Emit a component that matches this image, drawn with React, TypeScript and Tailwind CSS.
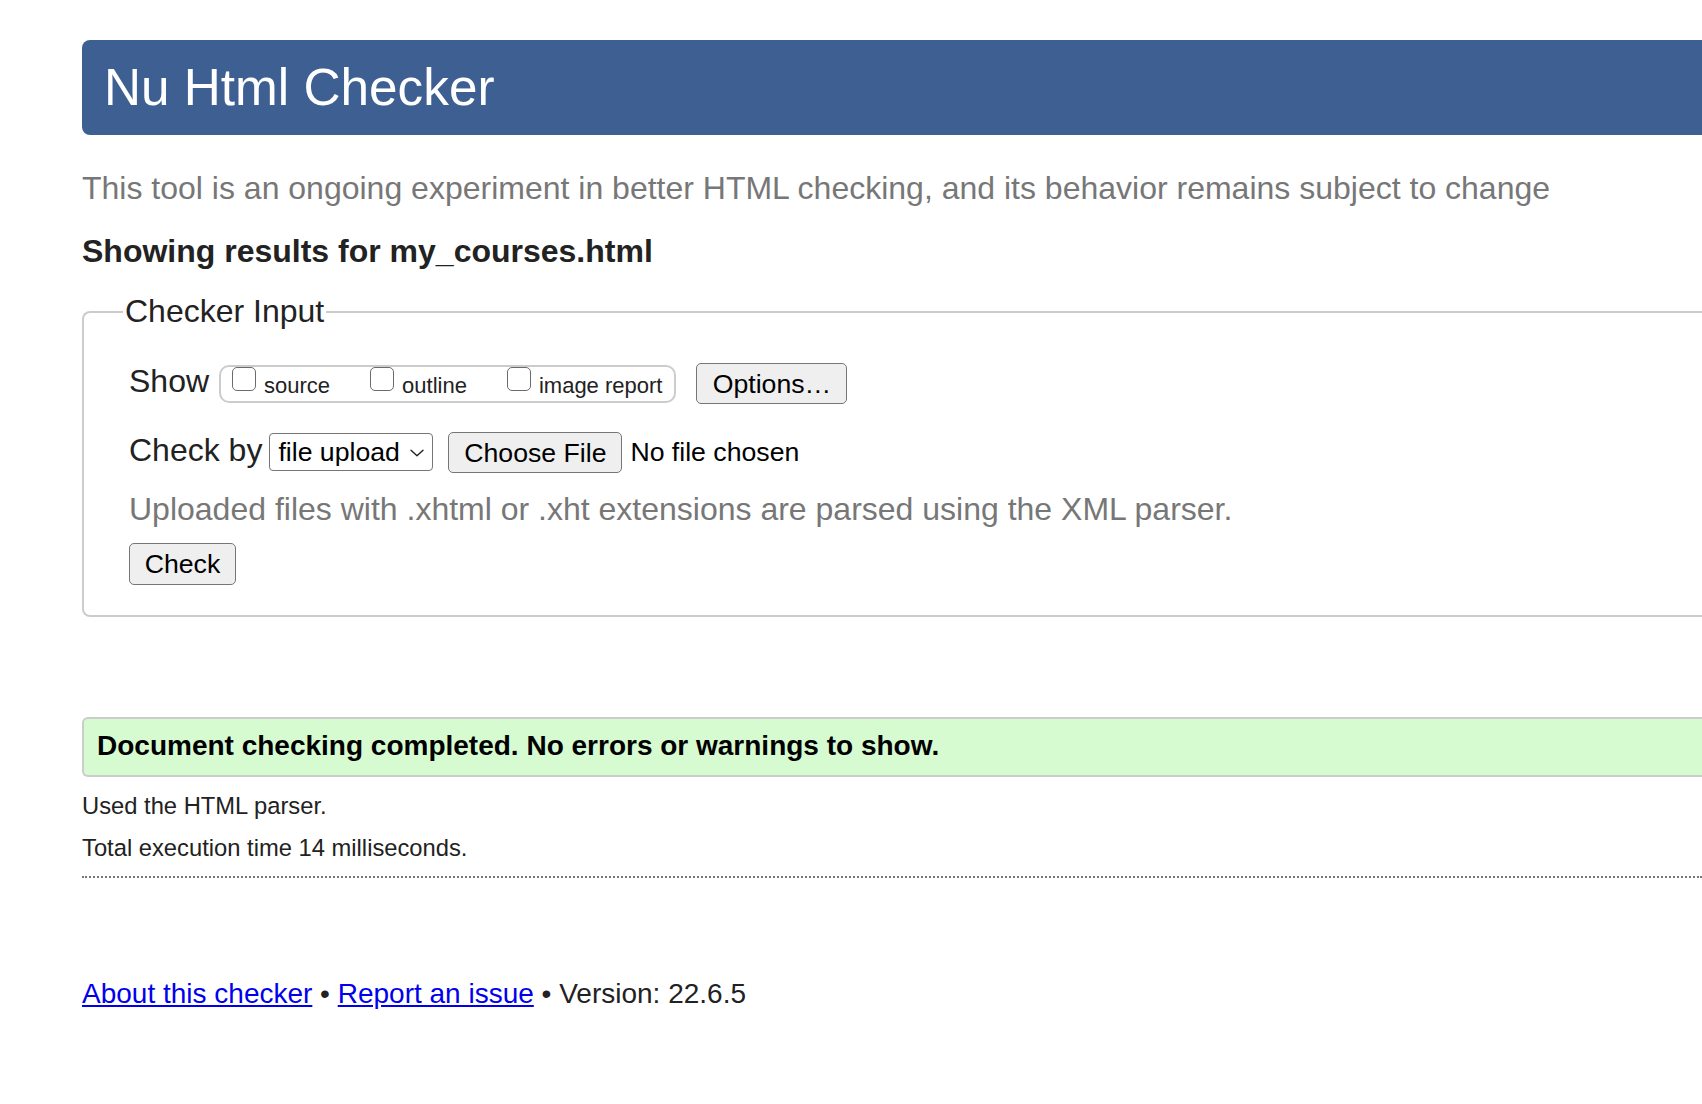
import React from "react";

function Box() {
  return (
    <span className="block h-[24px] w-[24px] shrink-0 rounded-[5px] border-[1.5px] border-[#6b6b6b] bg-white" />
  );
}

export default function App() {
  return (
    <div className="min-h-screen overflow-hidden bg-white pl-[82px] pt-[40px] font-['Liberation_Sans',Arial,sans-serif] text-[#222]">
      <header className="flex h-[95px] items-center rounded-l-[8px] bg-[#3e5f92] pl-[22px]">
        <h1 className="whitespace-nowrap text-[51.3px] leading-none text-white">Nu Html Checker</h1>
      </header>

      <p className="mt-[35px] whitespace-nowrap text-[32px] leading-[37px] text-[#777]">
        This tool is an ongoing experiment in better HTML checking, and its behavior remains subject to change
      </p>

      <h2 className="mt-[26px] whitespace-nowrap text-[32px] font-bold leading-[37px]">
        Showing results for my_courses.html
      </h2>

      <fieldset className="mt-[23px] rounded-l-[8px] border-2 border-r-0 border-[#cccccc] p-0">
        <legend className="ml-[39px] px-[2px] text-[32px] leading-[37px]">Checker Input</legend>
        <div className="pl-[45px] pt-[33px] pb-[30px]">
          <div className="flex items-start">
            <span className="whitespace-nowrap text-[32px] leading-[37px]">Show</span>
            <div className="ml-[10px] mt-[2px] flex h-[38px] items-start rounded-[10px] border-2 border-[#cccccc] pl-[11px] pr-[12px]">
              <Box />
              <span className="ml-[8px] mt-[6px] whitespace-nowrap text-[22px] leading-[25px]">source</span>
              <span className="ml-[40px]">
                <Box />
              </span>
              <span className="ml-[8px] mt-[6px] whitespace-nowrap text-[22px] leading-[25px]">outline</span>
              <span className="ml-[40px]">
                <Box />
              </span>
              <span className="ml-[8px] mt-[6px] whitespace-nowrap text-[22px] leading-[25px]">image report</span>
            </div>
            <button className="ml-[20px] mt-0 flex h-[41px] w-[151px] items-center justify-center rounded-[5px] border-[1.5px] border-[#767676] bg-[#efefef] text-[26.67px] leading-[30px] text-black">
              Options…
            </button>
          </div>

          <div className="mt-[28px] flex items-start">
            <span className="whitespace-nowrap text-[32px] leading-[37px]">Check by</span>
            <div className="ml-[7px] mt-[1px] flex h-[38px] w-[164px] items-center justify-between rounded-[4px] border-[1.5px] border-[#767676] bg-white pl-[8px] pr-[8px] text-black">
              <span className="whitespace-nowrap text-[26.67px] leading-[30px]">file upload</span>
              <svg width="14" height="8" viewBox="0 0 14 8" className="mt-[2px] shrink-0">
                <path d="M1 1.2 L7 6.8 L13 1.2" fill="none" stroke="#222" strokeWidth="1.4" strokeLinecap="round" strokeLinejoin="round" />
              </svg>
            </div>
            <button className="ml-[15px] mt-0 flex h-[41px] w-[174px] items-center justify-center rounded-[5px] border-[1.5px] border-[#767676] bg-[#efefef] text-[26.67px] leading-[30px] text-black">
              Choose File
            </button>
            <span className="ml-[8px] mt-[5px] whitespace-nowrap text-[26.67px] leading-[30px] text-black">No file chosen</span>
          </div>

          <p className="mt-[18.3px] whitespace-nowrap text-[32px] leading-[37px] text-[#777]">
            Uploaded files with .xhtml or .xht extensions are parsed using the XML parser.
          </p>

          <button className="mt-[15px] flex h-[42px] w-[107px] items-center justify-center rounded-[5px] border-[1.5px] border-[#767676] bg-[#efefef] text-[26.67px] leading-[30px] text-black">
            Check
          </button>
        </div>
      </fieldset>

      <div className="mt-[99.5px] h-[60px] rounded-l-[6px] border-2 border-r-0 border-[#cccccc] bg-[#d6fbd0] pl-[13px] pt-[11px]">
        <p className="whitespace-nowrap text-[28px] font-bold leading-[32px] text-black">
          Document checking completed. No errors or warnings to show.
        </p>
      </div>

      <p className="mt-[15.4px] whitespace-nowrap text-[23.75px] leading-[27px]">Used the HTML parser.</p>
      <p className="mt-[15px] whitespace-nowrap text-[23.75px] leading-[27px]">Total execution time 14 milliseconds.</p>

      <div className="mt-[15.3px] border-t-2 border-dotted border-[#777]" />

      <p className="mt-[99.3px] whitespace-nowrap text-[28px] leading-[32px]">
        <a href="#" className="text-[#0000ee] underline">About this checker</a>
        {" • "}
        <a href="#" className="text-[#0000ee] underline">Report an issue</a>
        {" • Version: 22.6.5"}
      </p>
    </div>
  );
}
